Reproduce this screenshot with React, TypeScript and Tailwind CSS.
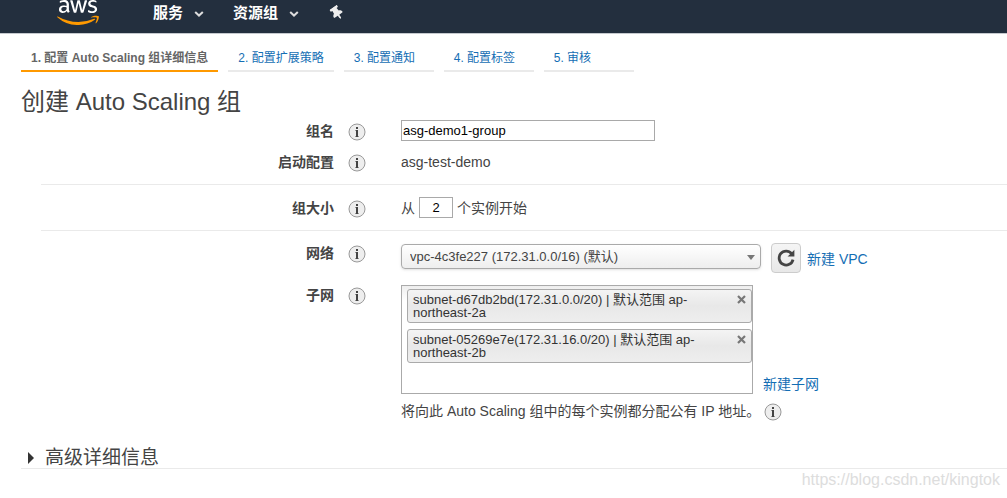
import { useId, useState } from "react";
import type { ReactNode } from "react";
import { FaAws, FaThumbtack } from "react-icons/fa";

function InfoIcon({ label }: { label: string }) {
  return (
    <button type="button" aria-label={label} className="h-[18px] w-[18px] shrink-0">
      <svg viewBox="0 0 18 18" className="block h-[18px] w-[18px]">
        <circle cx="9" cy="9" r="8" fill="#eeeeee" stroke="#999999" strokeWidth="1" />
        <path d="M8 4h2v2H8zM8 7h2v7H8z" fill="#444444" />
        <path d="M7 7h1v1H7zM7 13h1v1H7zM10 13h1v1h-1z" fill="#999999" />
      </svg>
    </button>
  );
}

function Chevron() {
  return (
    <svg viewBox="0 0 10 6" className="mt-[2px] h-[6px] w-[10px]">
      <path d="M1.2 1l3.8 3.6L8.8 1" fill="none" stroke="#dddddd" strokeWidth="2" />
    </svg>
  );
}

function Header() {
  return (
    <header className="flex h-[34px] items-start border-b border-[#c5c9ce] bg-[#232f3e] pl-[57px] font-bold text-white">
      <svg className="absolute h-0 w-0" aria-hidden="true">
        <defs>
          <linearGradient id="aws-fill" gradientUnits="userSpaceOnUse" x1="0" y1="64" x2="0" y2="448">
            <stop offset="0.59" stopColor="#ffffff" />
            <stop offset="0.59" stopColor="#ff9900" />
          </linearGradient>
        </defs>
      </svg>
      <a href="#" aria-label="aws" className="block w-[42px]">
        <FaAws viewBox="0 64 640 384" fill="url(#aws-fill)" className="h-[25px] w-[42px]" />
      </a>
      <nav className="ml-[54px] flex h-[26px] items-center text-[15px] leading-[20px]">
        <button type="button" className="flex items-center gap-[11px]">
          服务
          <Chevron />
        </button>
        <button type="button" className="ml-[29px] flex items-center gap-[11px]">
          资源组
          <Chevron />
        </button>
        <button type="button" aria-label="固定" className="ml-[31px]">
          <FaThumbtack className="h-[14px] w-[14px] -rotate-[35deg] text-[#eeeeee]" />
        </button>
      </nav>
    </header>
  );
}

const steps = ["1. 配置 Auto Scaling 组详细信息", "2. 配置扩展策略", "3. 配置通知", "4. 配置标签", "5. 审核"];

function Steps() {
  return (
    <nav className="flex gap-[10px] pt-[14px] pl-[21px] text-[12px] leading-[20px]">
      {steps.map((step, i) => (
        <a
          key={step}
          href="#"
          className={
            i === 0
              ? "border-b-2 border-[#ff9900] px-[10px] pb-[2px] font-bold text-[#666666]"
              : "min-w-[90px] border-b-2 border-[#eaeaea] px-[10px] pb-[2px] text-[#146eb4]"
          }
        >
          {step}
        </a>
      ))}
    </nav>
  );
}

function Row({
  label,
  htmlFor,
  top = false,
  children,
}: {
  label: string;
  htmlFor?: string;
  top?: boolean;
  children: ReactNode;
}) {
  const align = top ? "flex items-start" : "flex items-center";
  return (
    <div className={align}>
      <div className="flex w-[360px] shrink-0 items-end gap-[14px]">
        <label htmlFor={htmlFor} className="w-[293px] text-right font-bold">
          {label}
        </label>
        <InfoIcon label={label + " 信息"} />
      </div>
      {children}
    </div>
  );
}

function Subnet({ name, zone, onRemove }: { name: string; zone: string; onRemove: () => void }) {
  return (
    <li className="flex h-[34px] items-start rounded-[3px] border border-[#aaaaaa] bg-linear-to-b from-[#f4f4f4] via-[#e8e8e8] to-[#eeeeee] pt-[3px] pr-[5px] pl-[5px] text-[13px] leading-[13px] text-[#333333]">
      <span className="grow">
        {name} | 默认范围 ap-
        <br />
        {zone}
      </span>
      <button type="button" aria-label={"移除 " + name} onClick={onRemove} className="pt-[2px]">
        <svg viewBox="0 0 9 9" className="h-[9px] w-[9px]">
          <path d="M1 1l7 7M8 1L1 8" stroke="#777777" strokeWidth="2.2" />
        </svg>
      </button>
    </li>
  );
}

const initialSubnets = [
  { name: "subnet-d67db2bd(172.31.0.0/20)", zone: "northeast-2a" },
  { name: "subnet-05269e7e(172.31.16.0/20)", zone: "northeast-2b" },
];

export default function App() {
  const id = useId();
  const [name, setName] = useState("asg-demo1-group");
  const [size, setSize] = useState("2");
  const [subnets, setSubnets] = useState(initialSubnets);

  return (
    <div className="bg-white font-['Liberation_Sans','Noto_Sans_CJK_SC',sans-serif] text-[14px] leading-[20px] text-[#444444]">
      <Header />
      <Steps />
      <main>
        <h1 className="pt-[14px] pl-[21px] text-[24px] leading-[32px]">创建 Auto Scaling 组</h1>
        <form className="ml-[41px]" onSubmit={(e) => e.preventDefault()}>
          <section className="flex flex-col gap-[11px] border-b border-[#eaeaea] pt-[2px] pb-[12px]">
            <Row label="组名" htmlFor={id + "name"}>
              <input
                id={id + "name"}
                value={name}
                onChange={(e) => setName(e.target.value)}
                className="h-[21px] w-[254px] border border-[#a9a9a9] px-[1px] text-[13px] text-black"
              />
            </Row>
            <Row label="启动配置">
              <span>asg-test-demo</span>
            </Row>
          </section>
          <section className="border-b border-[#eaeaea] py-[12px]">
            <Row label="组大小" htmlFor={id + "size"}>
              <div className="flex items-center gap-[4px]">
                从
                <input
                  id={id + "size"}
                  value={size}
                  onChange={(e) => setSize(e.target.value)}
                  className="h-[21px] w-[34px] border border-[#a9a9a9] text-center text-[13px] text-black"
                />
                个实例开始
              </div>
            </Row>
          </section>
          <section className="flex flex-col gap-[12px] pt-[12px]">
            <Row label="网络" htmlFor={id + "vpc"} top>
              <div className="flex items-start">
                <div className="relative pt-px">
                  <select
                    id={id + "vpc"}
                    className="block h-[25px] w-[360px] appearance-none rounded-[4px] border border-[#aaaaaa] bg-linear-to-b from-white to-[#eeeeee] pr-6 pl-2 text-[13px] shadow-sm"
                  >
                    <option>vpc-4c3fe227 (172.31.0.0/16) (默认)</option>
                  </select>
                  <svg viewBox="0 0 8 5" className="pointer-events-none absolute top-[12px] right-[6px] h-[5px] w-[8px]">
                    <path d="M0 0h8L4 5z" fill="#777777" />
                  </svg>
                </div>
                <button
                  type="button"
                  aria-label="刷新"
                  className="ml-[10px] flex h-[30px] w-[30px] items-center justify-center rounded-[4px] border border-[#cccccc] bg-linear-to-b from-[#f5f5f5] to-[#e8e8e8]"
                >
                  <svg viewBox="0 0 18 18" className="h-[18px] w-[18px]">
                    <path d="M14.6 4.6A7 7 0 1 0 16 10.6" fill="none" stroke="#444444" strokeWidth="2.8" />
                    <path d="M17.4 0.8V7.6H10.6z" fill="#444444" />
                  </svg>
                </button>
                <a href="#" className="ml-[6px] pt-[6px] text-[#146eb4]">
                  新建 VPC
                </a>
              </div>
            </Row>
            <Row label="子网" top>
              <div>
                <div className="flex items-end gap-[10px]">
                  <ul className="flex h-[109px] w-[352px] flex-col gap-[6px] border border-[#aaaaaa] bg-[linear-gradient(#eeeeee,#ffffff_15px)] pt-[3px] pl-[5px]">
                    {subnets.map((s) => (
                      <Subnet
                        key={s.name}
                        name={s.name}
                        zone={s.zone}
                        onRemove={() => setSubnets(subnets.filter((x) => x !== s))}
                      />
                    ))}
                  </ul>
                  <a href="#" className="text-[#146eb4]">
                    新建子网
                  </a>
                </div>
                <div className="flex items-end gap-[4px] pt-[7px]">
                  将向此 Auto Scaling 组中的每个实例都分配公有 IP 地址。
                  <InfoIcon label="公有 IP 信息" />
                </div>
              </div>
            </Row>
          </section>
        </form>
        <h2 className="mt-[26px] ml-[21px] border-b border-[#eaeaea] text-[19px] leading-[21px]">
          <button type="button" className="flex items-center gap-[11px] pl-[7px]">
            <svg viewBox="0 0 6 12" className="h-[12px] w-[6px]">
              <path d="M0 0l6 6-6 6z" fill="#333333" />
            </svg>
            高级详细信息
          </button>
        </h2>
      </main>
      <footer className="pr-[7px] text-right text-[16px] leading-[22px] text-[#dddddd]">
        https://blog.csdn.net/kingtok
      </footer>
    </div>
  );
}
